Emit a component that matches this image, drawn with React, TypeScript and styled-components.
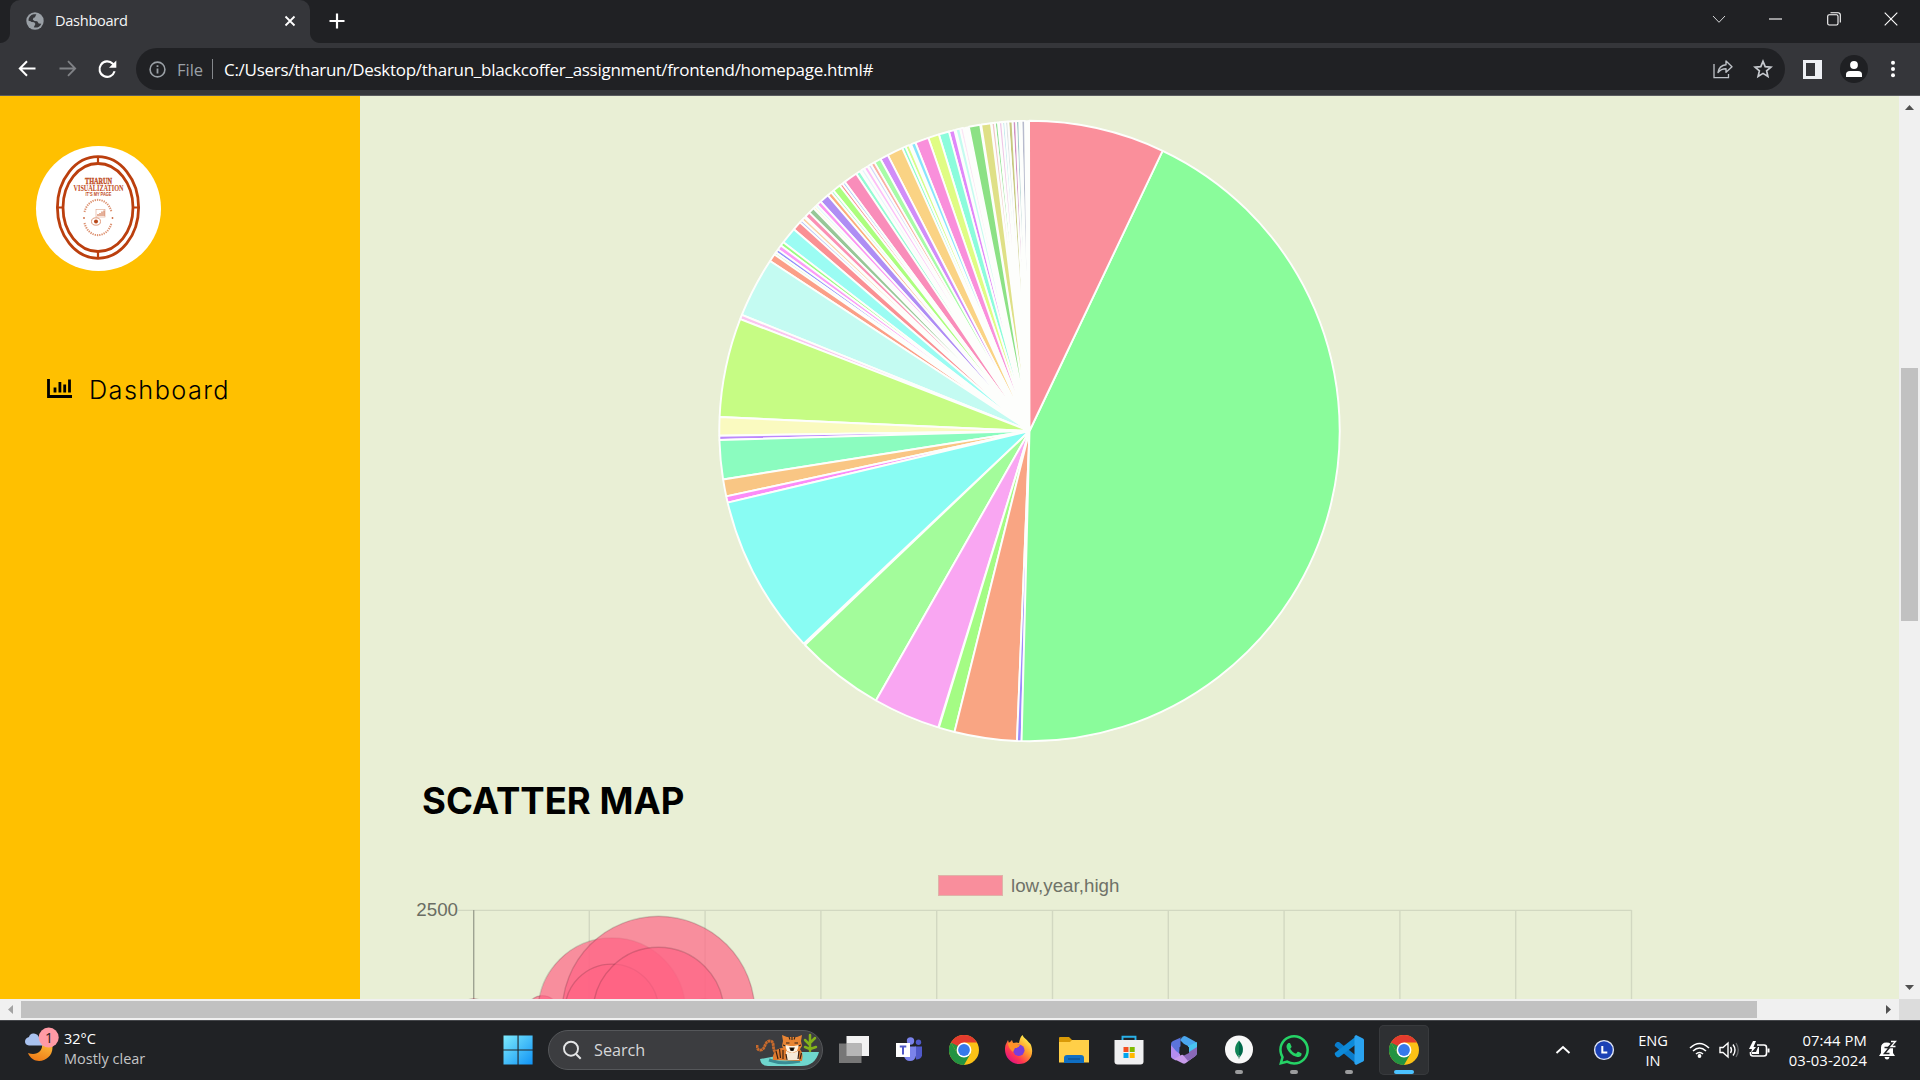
import React from 'react';
import styled, { createGlobalStyle } from 'styled-components';

const UI = '"Open Sans", "Noto Sans", sans-serif';

const Global = createGlobalStyle`
  *, *::before, *::after { box-sizing: border-box; }
  html, body { margin: 0; padding: 0; background: #202124; overflow: hidden; }
  svg { display: block; flex: none; }
`;

const Screen = styled.div`
  width: 1920px;
  height: 1080px;
  display: flex;
  flex-direction: column;
  overflow: hidden;
  font-family: ${UI};
`;

/* ---------- browser chrome ---------- */

const TabStrip = styled.div`
  height: 43px;
  background: #202124;
  display: flex;
  align-items: stretch;
`;

const TabFoot = styled.div<{ $side: 'left' | 'right' }>`
  width: 10px;
  background: radial-gradient(circle at ${p => (p.$side === 'left' ? '0 0' : '100% 0')}, #202124 9.5px, #35363a 10.5px);
  height: 10px;
  align-self: flex-end;
`;

const Tab = styled.div`
  width: 300px;
  background: #35363a;
  border-radius: 10px 10px 0 0;
  display: flex;
  align-items: center;
  padding: 0 14px 2px 16px;
`;

const TabTitle = styled.span`
  flex: 1;
  margin-left: 11px;
  padding-bottom: 1px;
  font-size: 14.6px;
  letter-spacing: -0.3px;
  color: #f4f5f6;
`;

const NewTab = styled.div`
  display: flex;
  align-items: center;
  margin-left: 7px;
  padding-bottom: 1px;
`;

const WindowButtons = styled.div`
  margin-left: auto;
  display: flex;
  align-items: center;
  padding-bottom: 5px;
`;

const WindowButton = styled.div`
  width: 57.5px;
  display: flex;
  justify-content: center;
`;

const Toolbar = styled.div`
  height: 53px;
  background: #35363a;
  border-bottom: 1px solid #5a5b5f;
  display: flex;
  align-items: center;
  padding: 0 20px 0 15px;
`;

const NavButtons = styled.div`
  display: flex;
  gap: 16px;
  width: 121px;
`;

const Omnibox = styled.div`
  width: 1649px;
  height: 42px;
  border-radius: 21px;
  background: #202124;
  display: flex;
  align-items: center;
  padding: 0 12px 0 13px;
`;

const Scheme = styled.span`
  margin-left: 11px;
  width: 27px;
  font-size: 16.5px;
  color: #9aa0a6;
`;

const SchemeRule = styled.span`
  width: 1px;
  height: 20px;
  background: #85888c;
  margin: 0 11px 0 8px;
`;

const Url = styled.span`
  flex: 1;
  white-space: nowrap;
  font-size: 17px;
  letter-spacing: -0.28px;
  color: #ffffff;
`;

const OmniActions = styled.div`
  display: flex;
  gap: 20px;
`;

const ToolbarActions = styled.div`
  flex: 1;
  display: flex;
  align-items: center;
  justify-content: space-between;
  padding-left: 18px;
`;

const Avatar = styled.div`
  width: 28px;
  height: 28px;
  border-radius: 50%;
  background: #1f2023;
  display: flex;
  align-items: center;
  justify-content: center;
`;

/* ---------- page ---------- */

const Viewport = styled.div`
  height: 924px;
  display: grid;
  grid-template-columns: 1899px 21px;
  grid-template-rows: 903px 21px;
`;

const Page = styled.div`
  display: flex;
  overflow: hidden;
  background: #e9efd5;
`;

const Sidebar = styled.aside`
  width: 360px;
  background: #ffc000;
  padding: 50px 0 0 36px;
`;

const Logo = styled.div`
  width: 125px;
  height: 125px;
  border-radius: 50%;
  background: #fff;
  overflow: hidden;
`;

const MenuItem = styled.div`
  margin-top: 97px;
  padding-left: 11px;
  height: 42px;
  display: flex;
  align-items: center;
  font-family: Inter, sans-serif;
  font-weight: 300;
  font-size: 25.3px;
  letter-spacing: 1.4px;
  color: #000;
`;

const MenuLabel = styled.span`
  margin-left: 16px;
`;

const Main = styled.main`
  flex: 1;
  display: flex;
  flex-direction: column;
`;

const PieBox = styled.div`
  height: 664px;
  padding: 22px 0 0 357px;
`;

const Heading = styled.h2`
  margin: 0;
  height: 82px;
  padding-left: 62px;
  line-height: 82px;
  font-family: Inter, sans-serif;
  font-size: 36.5px;
  font-weight: 700;
  white-space: nowrap;
  color: #000;
`;

const Legend = styled.div`
  margin-top: 33px;
  height: 21px;
  padding-left: 578px;
  display: flex;
  align-items: center;
  font-family: "Liberation Sans", Arial, sans-serif;
  font-size: 18.75px;
  line-height: 19px;
  color: #6f7268;
`;

const Swatch = styled.span`
  width: 65px;
  height: 21px;
  background: #f98e9c;
  border: 1px solid #dfb3a8;
  margin-right: 8px;
`;

const Plot = styled.div`
  flex: 1;
  display: flex;
  align-items: flex-start;
  font-family: "Liberation Sans", Arial, sans-serif;
  font-size: 18.75px;
  color: #6a6d64;
`;

const AxisLabel = styled.span`
  width: 98px;
  text-align: right;
  line-height: 22px;
  margin-top: 3px;
`;

const VScroll = styled.div`
  background: #f0f0f0;
  display: flex;
  flex-direction: column;
  align-items: center;
  justify-content: space-between;
  padding: 9px 0 9px;
`;

const VThumb = styled.div`
  width: 17px;
  height: 253px;
  background: #c1c1c1;
  margin-bottom: 106px;
`;

const HScroll = styled.div`
  background: #f0f0f0;
  display: flex;
  align-items: center;
  padding: 0 8px;
`;

const HThumb = styled.div`
  width: 1736px;
  height: 17px;
  background: #c1c1c1;
  margin: 0 auto 0 8px;
`;

const ScrollCorner = styled.div`
  background: #dcdcdc;
`;

const Arrow = styled.span<{ $dir: 'up' | 'down' | 'left' | 'right'; $muted?: boolean }>`
  width: ${p => (p.$dir === 'up' || p.$dir === 'down' ? 9 : 5)}px;
  height: ${p => (p.$dir === 'up' || p.$dir === 'down' ? 5 : 9)}px;
  background: ${p => (p.$muted ? '#a3a3a3' : '#505050')};
  clip-path: ${p =>
    ({
      up: 'polygon(50% 0, 100% 100%, 0 100%)',
      down: 'polygon(0 0, 100% 0, 50% 100%)',
      left: 'polygon(100% 0, 100% 100%, 0 50%)',
      right: 'polygon(0 0, 100% 50%, 0 100%)',
    })[p.$dir]};
`;

/* ---------- taskbar ---------- */

const Taskbar = styled.footer`
  height: 60px;
  background: #202225;
  border-top: 1px solid #44464a;
  display: grid;
  grid-template-columns: 490px 1fr 378px;
  color: #fff;
`;

const Weather = styled.div`
  display: flex;
  padding: 6px 0 0 24px;
`;

const WeatherText = styled.div`
  margin-left: 4px;
  padding-top: 2px;
  font-size: 14.5px;
  line-height: 20px;
  color: #fff;
  span { display: block; color: #c4c5c7; }
`;

const Apps = styled.div`
  display: flex;
  align-items: center;
  padding-bottom: 1px;
`;

const AppCell = styled.div<{ $active?: boolean }>`
  width: ${p => (p.$active ? 50 : 55)}px;
  height: 50px;
  margin: ${p => (p.$active ? '0 2.5px' : '0')};
  border-radius: 5px;
  background: ${p => (p.$active ? '#2e3033' : 'transparent')};
  box-shadow: ${p => (p.$active ? 'inset 0 0 0 1px #383a3d' : 'none')};
  display: flex;
  flex-direction: column;
  align-items: center;
  padding-top: 10px;
`;

const RunMark = styled.span<{ $active?: boolean }>`
  width: ${p => (p.$active ? 20 : 8)}px;
  height: 4px;
  margin-top: 5px;
  border-radius: 2px;
  background: ${p => (p.$active ? '#4cc2ff' : '#9b9c9e')};
`;

const SearchBox = styled.div`
  width: 275px;
  height: 40px;
  margin: 0 3px;
  border-radius: 20px;
  background: #3c3d40;
  border: 1px solid #55575a;
  display: flex;
  align-items: center;
  padding: 0 3px 0 13px;
  font-size: 16.2px;
  color: #d6d7d9;
  span { flex: 1; margin-left: 12px; }
`;

const Tray = styled.div`
  display: flex;
  align-items: center;
  padding: 0 0 1px 13px;
`;

const TrayApp = styled.div`
  margin-left: 22px;
`;

const Lang = styled.div`
  width: 40px;
  margin: 0 16px 0 18px;
  text-align: center;
  font-size: 14.6px;
  line-height: 20px;
`;

const Clock = styled.div`
  width: 90px;
  margin: 0 12px 0 7px;
  text-align: right;
  font-size: 14.8px;
  line-height: 20px;
  white-space: nowrap;
  letter-spacing: 0.1px;
`;

const TrayIcons = styled.div`
  display: flex;
  gap: 9px;
`;

/* ---------- pie ---------- */

// Angles in degrees, counter-clockwise from twelve o'clock.
const arcs: [number, number, string][] = [
  [1.02, 1.39, '#b7bbcd'], [1.65, 1.8, '#e2e8e4'], [2.01, 2.32, '#a2c8c8'], [2.69, 3.0, '#cf8fc2'],
  [3.31, 3.8, '#c7c880'], [4.1, 4.35, '#dfe3e6'], [4.73, 4.98, '#bfe9ee'], [5.17, 5.48, '#eec6e6'],
  [6.04, 6.35, '#90e092'], [6.53, 6.85, '#efc8c6'], [7.34, 8.78, '#dfe087'], [9.34, 11.1, '#8ce185'],
  [12.5, 12.75, '#fbe6f5'], [13.13, 13.57, '#c5fbf0'], [14.21, 14.91, '#df88f9'], [15.23, 16.84, '#8cfcdc'],
  [17.16, 18.91, '#e0fc84'], [19.18, 21.49, '#f98fdb'], [21.7, 22.25, '#88e4fc'], [23.02, 23.42, '#d6fd8c'],
  [23.76, 24.12, '#8dfdcb'], [24.35, 27.04, '#fad384'], [27.33, 28.6, '#d18df8'], [28.84, 29.86, '#a8fca7'],
  [30.15, 30.64, '#fab0a4'], [30.86, 31.15, '#d2d3fb'], [31.66, 32.02, '#fcbff8'], [32.5, 32.7, '#e3f5fa'],
  [33.34, 33.79, '#93fcd4'], [34.16, 36.44, '#f98dba'], [36.7, 36.92, '#a8c8fa'], [37.32, 37.58, '#f98c91'],
  [37.83, 39.01, '#acfe7e'], [39.4, 39.6, '#aefbc6'], [39.9, 40.38, '#fcae7d'], [40.72, 42.15, '#af8df4'],
  [42.5, 43.02, '#fb97f1'], [43.35, 43.55, '#c6fbfb'], [43.8, 44.0, '#fbfbbf'], [44.28, 45.03, '#97c797'],
  [45.47, 46.06, '#fb90b3'], [46.7, 47.06, '#fbd3a8'], [47.32, 47.6, '#afc0fb'], [47.88, 49.3, '#fa9094'],
  [49.6, 52.35, '#9bfcf3'], [52.7, 53.15, '#9cfc83'], [53.4, 54.05, '#fb9cf7'], [54.32, 54.67, '#8f90fb'],
  [55.0, 55.2, '#cffbd0'], [55.45, 56.62, '#fb9f87'], [56.9, 67.9, '#c4fbf2'], [68.15, 68.75, '#fac5f0'],
  [68.98, 87.25, '#c6fc84'], [87.6, 90.72, '#fafac0'], [91.02, 91.52, '#bd88fc'], [91.82, 98.85, '#8bfcbf'],
  [99.13, 102.0, '#f9c684'], [102.33, 103.2, '#fb8cf8'], [103.5, 133.1, '#89fcf3'], [133.8, 150.17, '#a3fc9b'],
  [150.5, 162.7, '#f9a6f2'], [163.2, 165.85, '#a4fc84'], [166.17, 177.5, '#f9a583'], [177.87, 178.35, '#9c8bfb'],
  [178.73, 334.41, '#8afc9b'], [334.78, 359.9, '#fa8f9b'],
];

const CX = 312.5;
const CY = 313;
const R = 310.2;
const HALF = 0.185;

const rim = (deg: number) => {
  const a = (deg * Math.PI) / 180;
  return `${(CX - R * Math.sin(a)).toFixed(2)} ${(CY - R * Math.cos(a)).toFixed(2)}`;
};

const Pie = () => {
  const slices = arcs.map(([from, to, color], i) => {
    const prev = i > 0 ? arcs[i - 1][1] : from - 1;
    const next = i < arcs.length - 1 ? arcs[i + 1][0] : to + 1;
    const a = from - prev < HALF * 2.4 ? (from + prev) / 2 : from - HALF;
    const b = next - to < HALF * 2.4 ? (next + to) / 2 : to + HALF;
    return { d: `M${CX} ${CY}L${rim(a)}A${R} ${R} 0 ${b - a > 180 ? 1 : 0} 0 ${rim(b)}Z`, color };
  });
  return (
    <svg width="626" height="626" viewBox="0 0 626 626">
      <circle cx={CX} cy={CY} r={R + 0.5} fill="#fdfefc" />
      {slices.map((s, i) => (
        <path key={i} d={s.d} fill={s.color} stroke="#fdfefc" strokeWidth="1.9" strokeLinejoin="bevel" />
      ))}
    </svg>
  );
};

/* ---------- scatter ---------- */

// x, y, radius
const bubbles = [
  [15.7, 115, 13], [84.5, 116, 17], [246, 115, 13],
  [153.8, 115.6, 74.3], [200.5, 116.7, 97], [153.8, 115, 47.5], [200.5, 116.7, 66],
];

const Scatter = () => (
  <svg width="1200" height="103" viewBox="0 0 1200 103">
    <path d="M0 14.4H1173.5" stroke="#d2d8c1" strokeWidth="1.4" />
    {Array.from({ length: 10 }, (_, i) => (
      <path key={i} d={`M${131.3 + i * 115.8} 14V103`} stroke="#d2d8c1" strokeWidth="1.4" />
    ))}
    <path d="M15.7 14V103" stroke="#9ea392" strokeWidth="1.4" />
    {bubbles.map(([x, y, r], i) => (
      <circle key={i} cx={x} cy={y} r={r - 0.6} fill="#ff6384" fillOpacity=".69" stroke="#000" strokeOpacity=".15" strokeWidth="1.4" />
    ))}
  </svg>
);

/* ---------- icons ---------- */

const Globe = () => (
  <svg width="18" height="18" viewBox="0 0 18 18">
    <circle cx="9" cy="9" r="8.7" fill="#9aa0a6" />
    <path d="M7.5 2.3c-2.9.6-5 3-5.1 6.3l3.3 1.5 2.5.2 1.2 1.7-1.6 3.3c3 .9 6.2-.4 7.5-3.6l-2.6-.2-1.5-2.2-2.6-.3-1.8-1.3.7-2 2.2-.4 1-1.8-.7-1.2Z" fill="#35363a" />
    <path d="M3.3 10.2l2.6 1.3.6 2.6-.8 1M11 3.2l-1 2.2 1.8 1.2 2.6-.5" stroke="#9aa0a6" strokeWidth="2" fill="none" />
  </svg>
);

const LogoArt = () => (
  <svg width="125" height="125" viewBox="0 0 125 125" fill="none">
    <g stroke="#bb3f0e" strokeWidth="2.8">
      <ellipse cx="62" cy="61.5" rx="40.6" ry="50.8" />
      <ellipse cx="62" cy="61.5" rx="35" ry="44" />
      <path d="M62 10v8M62 105v8M20.5 61.5h7M96.5 61.5h7" strokeWidth="2.2" />
    </g>
    <g fill="#c04a1a" fontFamily="Liberation Serif, serif" fontWeight="700">
      <text x="62.5" y="38.2" fontSize="9" stroke="#c04a1a" strokeWidth=".3" textAnchor="middle" textLength="27" lengthAdjust="spacingAndGlyphs">THARUN</text>
      <text x="62.5" y="44.6" fontSize="8.4" textAnchor="middle" textLength="50" lengthAdjust="spacingAndGlyphs">VISUALIZATION</text>
      <text x="62.5" y="49.6" fontSize="4.9" fontFamily="Liberation Sans, sans-serif" textAnchor="middle" textLength="26" lengthAdjust="spacingAndGlyphs">IT'S MY PAGE</text>
    </g>
    <g stroke="#dc9170" strokeWidth="2">
      <path d="M48.5 66A14 16.5 0 0 1 75.5 66M48.5 77A14 16.5 0 0 0 75.5 77" strokeDasharray="1.3 1" />
      <rect x="60" y="63.5" width="9" height="7.5" strokeWidth=".5" />
      <path d="M62 70v-2M64 70v-3M66 70v-4.5M68 70v-5.5" stroke="#c4501f" strokeWidth=".9" />
      <ellipse cx="60" cy="75.5" rx="4.5" ry="3.7" strokeWidth=".9" />
    </g>
    <circle cx="60" cy="75.5" r="2" fill="#b8481a" />
    <circle cx="48" cy="72" r=".9" fill="#cc6a40" />
    <circle cx="76.5" cy="72" r=".9" fill="#cc6a40" />
  </svg>
);

const ChromeIcon = () => (
  <svg width="30" height="30" viewBox="0 0 30 30">
    <circle cx="15" cy="15" r="15" fill="#fbc116" />
    <path d="M2 7.5A15 15 0 0 0 15 30l6.5-11.2L8.5 18.8Z" fill="#229342" />
    <path d="M2 7.5A15 15 0 0 1 28 7.5H15L9 15Z" fill="#e33b2e" />
    <path d="M2 7.5L8.5 18.8 11 12Z" fill="#229342" />
    <circle cx="15" cy="15" r="7.4" fill="#fff" />
    <circle cx="15" cy="15" r="5.9" fill="#3579ea" />
  </svg>
);

const Tiger = () => (
  <svg width="63" height="34" viewBox="0 0 63 34">
    <path d="M4 26q1 7 8 7h33q14 0 18-14L42 19Z" fill="#6fd6cd" />
    <path d="M13 27q14 5 31 1" stroke="#3a8c94" strokeWidth="3" fill="none" />
    <path d="M1 12q0 6 4 5c5-1 3-9 9-9 5 0 2 7 5 11" stroke="#c86a2c" strokeWidth="2.8" fill="none" strokeDasharray="2.6 .5" />
    <path d="M17 27q-1-10 8-12l6-1 12 1q5 5 3 13Z" fill="#df7a2e" />
    <path d="M30 17q7-3 12 0l1 10H30Z" fill="#f7ead8" />
    <path d="M26 2l5 2h10l5-2-1 6 1 5q-3 6-10 7-7-1-10-7l1-5Z" fill="#e88534" />
    <path d="M29 12l5 1h4l5-1-2 6-5 2-5-2Z" fill="#fff3e2" />
    <path d="M30 10h3.500M38.500 10H42M34 15h4l-1 2.500h-2ZM36 4v3M33 4l1 2.500M39 4l-1 2.500M27 12l2.500 1M45 12l-2.500 1" stroke="#2b2118" strokeWidth="1.1" />
    <path d="M20 18l2 8M23.500 16l1 9M27 17v9M30 21l1 6M43 18l-1 8M45.500 20l-1.500 6" stroke="#3a2012" strokeWidth="1.2" />
    <path d="M54 18V2M54 12l-5-5M54 10l5-5M54 16l-5-2M54 16l6-2" stroke="#83b11a" strokeWidth="2.5" strokeLinecap="round" />
  </svg>
);

const WindowsIcon = () => (
  <svg width="30" height="30" viewBox="0 0 30 30">
    <defs>
      <linearGradient id="win" x1="0" y1="0" x2="1" y2="1">
        <stop offset="0" stopColor="#7deafd" /><stop offset="1" stopColor="#1093f5" />
      </linearGradient>
    </defs>
    <path d="M.5.5h14v14H.5ZM15.600.5h14v14h-14ZM.5 15.500h14v14H.5ZM15.600 15.500h14v14h-14Z" fill="url(#win)" />
  </svg>
);

const TaskView = () => (
  <svg width="30" height="30" viewBox="0 0 30 30">
    <path d="M7.5 1H30v20H7.5Z" fill="#f2f2f2" />
    <path d="M0 8.5h22.5V28H0Z" fill="#777" />
    <path d="M7.5 8.5h15V21h-15Z" fill="#b6b6b6" />
  </svg>
);

const Teams = () => (
  <svg width="28" height="30" viewBox="0 0 28 30">
    <circle cx="23.5" cy="7.3" r="2.7" fill="#5059c9" />
    <circle cx="15.5" cy="6" r="3.7" fill="#7b83eb" />
    <path d="M20 11.5h7v9q-1 4-6 4Z" fill="#5059c9" />
    <path d="M9 11.5h12v9q-1 5.5-6 5.5t-6-5Z" fill="#7b83eb" />
    <path d="M1 8h14v14H1Z" fill="#fff" />
    <path d="M4.800 11.500h6.500M8 11v8.500" stroke="#5059c9" strokeWidth="2" />
  </svg>
);

const Firefox = () => (
  <svg width="30" height="30" viewBox="0 0 30 30">
    <defs>
      <linearGradient id="ff" x1=".85" y1=".1" x2=".2" y2=".9">
        <stop offset="0" stopColor="#fff44f" /><stop offset=".4" stopColor="#ff9a2b" /><stop offset=".75" stopColor="#ff3750" /><stop offset="1" stopColor="#e3157f" />
      </linearGradient>
    </defs>
    <path d="M18.500 0c1 3 4 4 6 7l2 2c5 11-2 20-11.500 20S-1 20 1.500 10L4 5l1 3 3-3 1 3q4-1 6 0 1-6 3.500-8Z" fill="url(#ff)" />
    <circle cx="14.800" cy="15.300" r="5.700" fill="#7a3ddb" />
    <path d="M4 8q4-2 7 1l5 1q-1 3-5 3l-2 4q-5-4-5-9Z" fill="#ff9327" />
  </svg>
);

const Folder = () => (
  <svg width="30" height="30" viewBox="0 0 30 30">
    <path d="M0 3q0-1 1-1h9l3 3v5H0Z" fill="#d99a07" />
    <path d="M0 7h11l2-2h17v22.500H0Z" fill="#ffcf48" />
    <path d="M5 28v-5q0-3 3-3h14q3 0 3 3v5Z" fill="#0f6fc4" />
    <path d="M9 24h12" stroke="#0a4c8b" strokeWidth="1.2" />
  </svg>
);

const Store = () => (
  <svg width="30" height="30" viewBox="0 0 30 30">
    <path d="M8.500 6V1.700h13V6" fill="none" stroke="#29b1e8" strokeWidth="1.9" />
    <path d="M.5 5h29v21.500q0 3-3 3h-23q-3 0-3-3Z" fill="#f0f0f1" />
    <path d="M9.500 12h5v5h-5Z" fill="#f25022" />
    <path d="M15.700 12h5v5h-5Z" fill="#7fba00" />
    <path d="M9.500 18h5v5h-5Z" fill="#00a4ef" />
    <path d="M15.700 18h5v5h-5Z" fill="#ffb900" />
  </svg>
);

const M365 = () => (
  <svg width="28" height="30" viewBox="0 0 28 30">
    <path d="M13 1.500q1.500-.8 3 0l9 5q2 1 2 3V16l-9-5-4-2-4-4Z" fill="#4aa6ee" />
    <path d="M18 11l9-4v11q0 2-2 3l-7-4Z" fill="#49c3f1" />
    <path d="M13 1.500L10.500 3v8L9 20l-7 3q-1-1-1-2V9q0-2 2-3Z" fill="#5b74dc" />
    <path d="M1 10v11q0 2 2 3l3 1.500 4-3.500V19l-4-3Z" fill="#b48df0" />
    <path d="M4 24l6-3.500L19 17l6 4q0 .5-1 1l-8.500 6.300q-1.500.8-3 0Z" fill="#c79bea" />
    <path d="M19 17l8-5v6q0 2-2 3.500L18 26l-5-6Z" fill="#8a68b8" />
    <path d="M14 9.500l5 2.800v5.600L14 20.500l-4.500-2.600v-5.600Z" fill="#202225" />
  </svg>
);

const Mongo = () => (
  <svg width="28" height="30" viewBox="0 0 28 30">
    <circle cx="14" cy="14.5" r="14" fill="#f8f8f8" />
    <path d="M14 5.500q8 9 0 17.500Z" fill="#00684a" />
    <path d="M14 5.500q-8 9 0 17.500Z" fill="#128457" />
    <path d="M14 20v4" stroke="#9bb5a8" />
  </svg>
);

const WhatsApp = () => (
  <svg width="30" height="30" viewBox="0 0 24 24">
    <path fill="#25d366" d="M17.472 14.382c-.297-.149-1.758-.867-2.030-.967-.273-.099-.471-.148-.670.150-.197.297-.767.966-.940 1.164-.173.199-.347.223-.644.075-.297-.150-1.255-.463-2.390-1.475-.883-.788-1.480-1.761-1.653-2.059-.173-.297-.018-.458.130-.606.134-.133.298-.347.446-.520.149-.174.198-.298.298-.497.099-.198.050-.371-.025-.520-.075-.149-.669-1.612-.916-2.207-.242-.579-.487-.500-.669-.510-.173-.008-.371-.010-.570-.010-.198 0-.520.074-.792.372-.272.297-1.040 1.016-1.040 2.479 0 1.462 1.065 2.875 1.213 3.074.149.198 2.096 3.200 5.077 4.487.709.306 1.262.489 1.694.625.712.227 1.360.195 1.871.118.571-.085 1.758-.719 2.006-1.413.248-.694.248-1.289.173-1.413-.074-.124-.272-.198-.570-.347m-5.421 7.403h-.004a9.870 9.870 0 01-5.031-1.378l-.361-.214-3.741.982.998-3.648-.235-.374a9.860 9.860 0 01-1.510-5.260c.001-5.450 4.436-9.884 9.888-9.884 2.640 0 5.122 1.030 6.988 2.898a9.825 9.825 0 012.893 6.994c-.003 5.450-4.437 9.884-9.885 9.884m8.413-18.297A11.815 11.815 0 0012.050 0C5.495 0 .160 5.335.157 11.892c0 2.096.547 4.142 1.588 5.945L.057 24l6.305-1.654a11.882 11.882 0 005.683 1.448h.005c6.554 0 11.890-5.335 11.893-11.893a11.821 11.821 0 00-3.480-8.413z" />
  </svg>
);

const VSCode = () => (
  <svg width="30" height="30" viewBox="0 0 30 30">
    <path d="M1 9l2-2h2l17.500 14v8L.7 11Z" fill="#0a7ccb" />
    <path d="M1 20l2 2.300h2L22.500 9V1L.7 18Z" fill="#0d8ad8" />
    <path d="M22 0l7 3.500q1 .5 1 1.500v20q0 1-1 1.500L22 30l-1.500-1.300V1.300Z" fill="#2aa3f0" />
  </svg>
);

const MoonCloud = () => (
  <svg width="36" height="36" viewBox="0 0 36 36">
    <defs>
      <linearGradient id="moon" x1=".8" y1="0" x2=".3" y2="1">
        <stop offset="0" stopColor="#fbb637" /><stop offset="1" stopColor="#ef7a17" />
      </linearGradient>
    </defs>
    <path d="M28 17c4 16-18 24-24 9 9 3 15-2 14-9Z" fill="url(#moon)" />
    <path d="M5 18.500q-4-.5-4-4t4-4.500q1-4 5-3.500 4 .5 5 4l5 2v6Z" fill="#a9c2ef" />
    <circle cx="24.700" cy="10.500" r="10" fill="#ff9aa5" />
    <text x="24.900" y="15.500" fontSize="14" textAnchor="middle" fill="#2a1a1c">1</text>
  </svg>
);

const line = { fill: 'none', stroke: '#fff', strokeWidth: 1.6 } as const;

const App = () => (
  <Screen>
    <Global />
    <TabStrip>
      <TabFoot $side="left" />
      <Tab>
        <Globe />
        <TabTitle>Dashboard</TabTitle>
        <svg width="12" height="12" viewBox="0 0 12 12"><path d="M1.500 1.500l9 9m0-9l-9 9" {...line} strokeWidth="1.8" /></svg>
      </Tab>
      <TabFoot $side="right" />
      <NewTab>
        <svg width="20" height="20" viewBox="0 0 20 20"><path d="M10 2.500v15M2.500 10h15" {...line} strokeWidth="2.2" /></svg>
      </NewTab>
      <WindowButtons>
        <WindowButton><svg width="14" height="9" viewBox="0 0 14 9"><path d="M1 1l6 6.300L13 1" {...line} stroke="#d5d6d8" strokeWidth="1" /></svg></WindowButton>
        <WindowButton><svg width="14" height="2" viewBox="0 0 14 2"><path d="M0 1h13" {...line} strokeWidth="1.1" /></svg></WindowButton>
        <WindowButton>
          <svg width="14" height="14" viewBox="0 0 14 14"><rect x=".7" y="2.7" width="10.3" height="10.3" rx="1.5" {...line} strokeWidth="1.1" /><path d="M3.500.7H11q2.300 0 2.300 2.300v7.500" {...line} strokeWidth="1.1" /></svg>
        </WindowButton>
        <WindowButton><svg width="14" height="14" viewBox="0 0 14 14"><path d="M.7.7l12.600 12.600m0-12.600L.7 13.300" {...line} strokeWidth="1.1" /></svg></WindowButton>
      </WindowButtons>
    </TabStrip>
    <Toolbar>
      <NavButtons>
        <svg width="24" height="24" viewBox="0 0 24 24"><path d="M20.500 11.500H5M12 4.200L4.800 11.500l7.200 7.300" {...line} strokeWidth="2" /></svg>
        <svg width="24" height="24" viewBox="0 0 24 24"><path d="M4.500 11.500H20M13 4.200l7.200 7.300-7.200 7.300" {...line} stroke="#808286" strokeWidth="1.8" /></svg>
        <svg width="24" height="24" viewBox="0 0 24 24"><path d="M19.600 14.300A7.700 7.700 0 1 1 17.800 6.800L20 9" {...line} strokeWidth="2.1" /><path d="M21.300 3.500v7.300H14Z" fill="#fff" /></svg>
      </NavButtons>
      <Omnibox>
        <svg width="17" height="17" viewBox="0 0 17 17"><circle cx="8.500" cy="8.500" r="7.4" {...line} stroke="#9aa0a6" /><path d="M8.500 7.500v5M8.500 4.300v1.800" {...line} stroke="#9aa0a6" strokeWidth="1.8" /></svg>
        <Scheme>File</Scheme>
        <SchemeRule />
        <Url>C:/Users/tharun/Desktop/tharun_blackcoffer_assignment/frontend/homepage.html#</Url>
        <OmniActions>
          <svg width="20" height="20" viewBox="0 0 20 20"><path d="M1 5v13.700h14.500V15" {...line} stroke="#bdc1c6" strokeWidth="1.3" /><path d="M5 13.500q1-7 8-7.800V2l6 5.700-6 5.600V9.800q-5 0-8 3.700Z" {...line} stroke="#bdc1c6" strokeWidth="1.4" strokeLinejoin="round" /></svg>
          <svg width="20" height="20" viewBox="0 0 20 20"><path d="M10 2.300l2.200 5.300 5.700.5-4.300 3.700 1.300 5.600L10 14.400l-4.900 3 1.300-5.600-4.300-3.700 5.700-.5Z" {...line} stroke="#c7cacf" strokeWidth="1.7" /></svg>
        </OmniActions>
      </Omnibox>
      <ToolbarActions>
        <svg width="19" height="19" viewBox="0 0 19 19"><path d="M0 0h19v19H0ZM3 3v13h9V3Z" fill="#eef0f4" fillRule="evenodd" /></svg>
        <Avatar><svg width="16" height="16" viewBox="0 0 16 16"><circle cx="8" cy="4" r="3.9" fill="#fff" /><path d="M0 16v-2.500Q0 10 4 10h8q4 0 4 3.500V16Z" fill="#fff" /></svg></Avatar>
        <svg width="14" height="18" viewBox="0 0 14 18"><g fill="#fff"><circle cx="7" cy="2.700" r="2" /><circle cx="7" cy="9" r="2" /><circle cx="7" cy="15.300" r="2" /></g></svg>
      </ToolbarActions>
    </Toolbar>

    <Viewport>
      <Page>
        <Sidebar>
          <Logo><LogoArt /></Logo>
          <MenuItem>
            <svg width="26" height="20" viewBox="0 0 26 20"><path d="M1.500 0v17.500H25" fill="none" stroke="#000" strokeWidth="2.8" /><path d="M8 8.500v5M12.900 3v10.500M17.700 5.500v8M22.500.5v13" stroke="#000" strokeWidth="2.8" /></svg>
            <MenuLabel>Dashboard</MenuLabel>
          </MenuItem>
        </Sidebar>
        <Main>
          <PieBox><Pie /></PieBox>
          <Heading>SCATTER MAP</Heading>
          <Legend><Swatch />low,year,high</Legend>
          <Plot>
            <AxisLabel>2500</AxisLabel>
            <Scatter />
          </Plot>
        </Main>
      </Page>
      <VScroll><Arrow $dir="up" /><VThumb /><Arrow $dir="down" /></VScroll>
      <HScroll><Arrow $dir="left" $muted /><HThumb /><Arrow $dir="right" /></HScroll>
      <ScrollCorner />
    </Viewport>

    <Taskbar>
      <Weather>
        <MoonCloud />
        <WeatherText>32°C<span>Mostly clear</span></WeatherText>
      </Weather>
      <Apps>
        <AppCell><WindowsIcon /></AppCell>
        <SearchBox>
          <svg width="20" height="20" viewBox="0 0 20 20"><circle cx="9" cy="8.700" r="7" {...line} stroke="#e4e5e6" strokeWidth="1.9" /><path d="M14 14l4.700 4.700" {...line} stroke="#e4e5e6" strokeWidth="2" /></svg>
          <span>Search</span>
          <Tiger />
        </SearchBox>
        <AppCell><TaskView /></AppCell>
        <AppCell><Teams /></AppCell>
        <AppCell><ChromeIcon /></AppCell>
        <AppCell><Firefox /></AppCell>
        <AppCell><Folder /></AppCell>
        <AppCell><Store /></AppCell>
        <AppCell><M365 /></AppCell>
        <AppCell><Mongo /><RunMark /></AppCell>
        <AppCell><WhatsApp /><RunMark /></AppCell>
        <AppCell><VSCode /><RunMark /></AppCell>
        <AppCell $active><ChromeIcon /><RunMark $active /></AppCell>
      </Apps>
      <Tray>
        <svg width="16" height="10" viewBox="0 0 16 10"><path d="M1.500 8L8 2l6.500 6" {...line} strokeWidth="1.9" /></svg>
        <TrayApp>
          <svg width="22" height="22" viewBox="0 0 22 22"><circle cx="11" cy="11" r="9.4" fill="#1b41b5" stroke="#dfe5f5" strokeWidth="1.4" /><path d="M9.300 7v6.500h5" stroke="#fff" strokeWidth="2" fill="none" /></svg>
        </TrayApp>
        <Lang>ENG<br />IN</Lang>
        <TrayIcons>
          <svg width="21" height="18" viewBox="0 0 21 18"><path d="M1 7q9.500-9 19 0M4 10q6.500-6 13 0M7 13q3.500-3 7 0" {...line} /><circle cx="10.500" cy="15" r="1.9" fill="#fff" /></svg>
          <svg width="21" height="18" viewBox="0 0 21 18"><path d="M1 6.500h3L9 2v14l-5-4.500H1Z" {...line} strokeWidth="1.4" /><path d="M11.500 6q2 3 0 6M14 3.500q4 5.500 0 11" {...line} strokeWidth="1.4" /><path d="M17 2q4.500 7 0 14" {...line} stroke="#66686b" strokeWidth="1.3" /></svg>
          <svg width="21" height="18" viewBox="0 0 21 18"><path d="M8 4h7q2.500 0 2.500 2.500v6Q17.500 15 15 15H4q-2.500 0-2.500-2.500V11" {...line} /><path d="M9 6h1v7H3v-2l4 0Z" fill="#fff" /><path d="M18.500 7.500h2v4h-2Z" fill="#fff" /><path d="M4 0L0 8h3L2 12l5-6H4.500L7 0Z" fill="#fff" /></svg>
        </TrayIcons>
        <Clock>07:44 PM<br />03-03-2024</Clock>
        <svg width="18" height="20" viewBox="0 0 18 20"><path d="M0 16l2-3V8q0-5.500 5.500-5.500T14 8v5l2 3Z" fill="#fff" /><path d="M5.500 17h5q-.5 2.500-2.500 2.500T5.500 17Z" fill="#fff" /><path d="M5.500 7.500h5l-5 6h5" stroke="#202225" strokeWidth="1.5" fill="none" /><path d="M11.500 1h5l-5 5.500h5" stroke="#202225" strokeWidth="3.5" fill="none" /><path d="M12 1.500h4.500l-4.500 5h4.500" stroke="#fff" strokeWidth="1.3" fill="none" /></svg>
      </Tray>
    </Taskbar>
  </Screen>
);

export default App;
